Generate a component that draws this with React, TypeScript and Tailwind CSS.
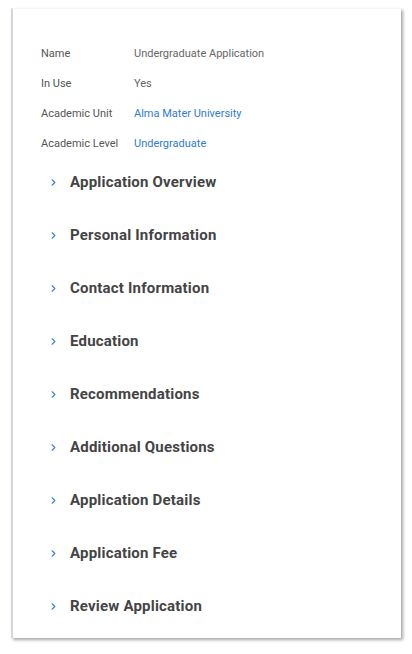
import { ChevronRight } from "lucide-react";

const details: { label: string; value: string; link?: boolean }[] = [
  { label: "Name", value: "Undergraduate Application" },
  { label: "In Use", value: "Yes" },
  { label: "Academic Unit", value: "Alma Mater University", link: true },
  { label: "Academic Level", value: "Undergraduate", link: true },
];

const sections = [
  "Application Overview",
  "Personal Information",
  "Contact Information",
  "Education",
  "Recommendations",
  "Additional Questions",
  "Application Details",
  "Application Fee",
  "Review Application",
];

export default function App() {
  return (
    <div
      className="h-[654px] w-[412px] bg-white pl-[11px] pt-[8px]"
      style={{ fontFamily: "Roboto, 'Liberation Sans', sans-serif" }}
    >
      <div className="h-[630px] w-[390px] border-t border-l-2 border-t-gray-100 border-l-gray-300 bg-white shadow-[2px_2px_3px_rgba(0,0,0,0.35)]">
        {/* 기본 정보 */}
        <div className="flex flex-col gap-[16px] pl-[28px] pt-[38px]">
          {details.map((d) => (
            <div key={d.label} className="flex h-[14px] items-center text-[11px]">
              <span className="w-[93px] text-[#555]">{d.label}</span>
              <span className={d.link ? "text-[#2f7bd6]" : "text-[#666]"}>
                {d.value}
              </span>
            </div>
          ))}
        </div>

        <div className="flex flex-col pl-[35px] pt-[20px]">
          {sections.map((s) => (
            <div key={s} className="flex h-[53px] items-start">
              <div className="flex h-[22px] items-center">
                <ChevronRight
                  className="h-[11px] w-[11px] text-[#3b82d6]"
                  strokeWidth={2.5}
                />
                <span className="ml-[11px] text-[15px] font-bold tracking-[0.2px] text-[#444]">
                  {s}
                </span>
              </div>
            </div>
          ))}
        </div>
      </div>
    </div>
  );
}
